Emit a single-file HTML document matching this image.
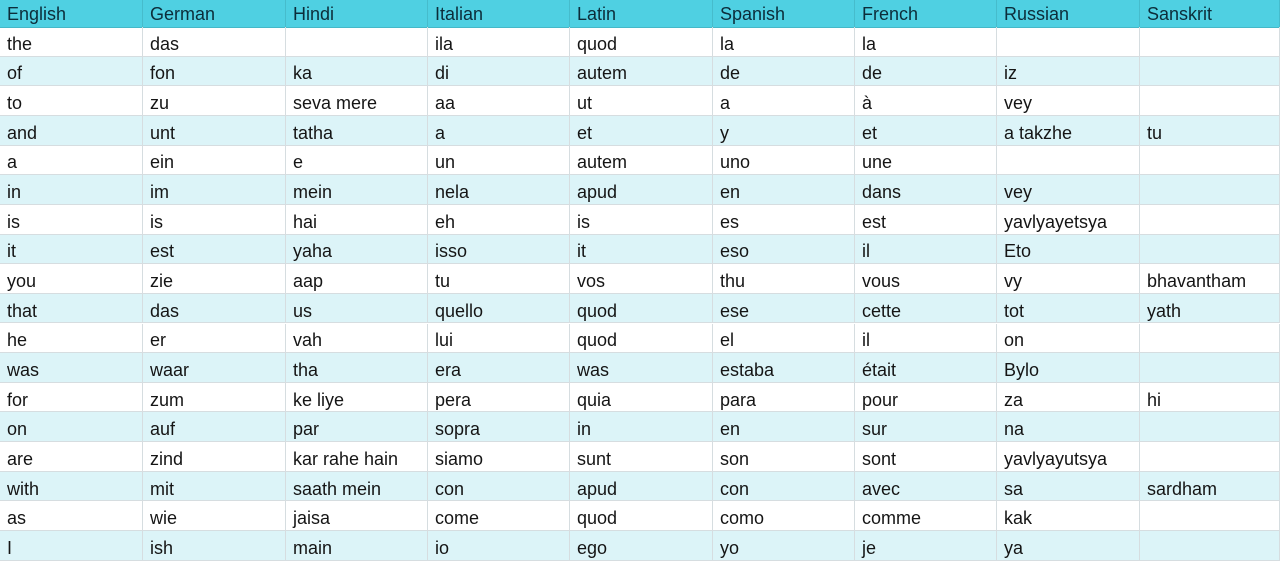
<!DOCTYPE html>
<html><head><meta charset="utf-8"><style>
body{margin:0;width:1280px;height:563px;overflow:hidden;background:#fff;font-family:"Liberation Sans",Arial,sans-serif;font-size:18px;color:#151515;position:relative}
.r{position:absolute;left:0;width:1280px;border-bottom:1px solid #d6dde0;box-sizing:border-box}
.c{position:absolute;top:0;bottom:0;padding-left:7px;padding-top:6px;box-sizing:border-box;border-right:1px solid #d6dde0;display:flex;align-items:center;white-space:nowrap}
.h{background:#4fd0e2;color:#0c2d3a;border-bottom:1px solid #44b8c8}
.h .c{border-right:1px solid #46bccc;padding-top:2px}
.a{background:#dcf4f8}
</style></head><body>
<div id="t"></div>
<script>
var cols=[0,143,286,428,570,713,855,997,1140,1280];
var data=[
["English","German","Hindi","Italian","Latin","Spanish","French","Russian","Sanskrit"],
["the","das","","ila","quod","la","la","",""],
["of","fon","ka","di","autem","de","de","iz",""],
["to","zu","seva mere","aa","ut","a","à","vey",""],
["and","unt","tatha","a","et","y","et","a takzhe","tu"],
["a","ein","e","un","autem","uno","une","",""],
["in","im","mein","nela","apud","en","dans","vey",""],
["is","is","hai","eh","is","es","est","yavlyayetsya",""],
["it","est","yaha","isso","it","eso","il","Eto",""],
["you","zie","aap","tu","vos","thu","vous","vy","bhavantham"],
["that","das","us","quello","quod","ese","cette","tot","yath"],
["he","er","vah","lui","quod","el","il","on",""],
["was","waar","tha","era","was","estaba","était","Bylo",""],
["for","zum","ke liye","pera","quia","para","pour","za","hi"],
["on","auf","par","sopra","in","en","sur","na",""],
["are","zind","kar rahe hain","siamo","sunt","son","sont","yavlyayutsya",""],
["with","mit","saath mein","con","apud","con","avec","sa","sardham"],
["as","wie","jaisa","come","quod","como","comme","kak",""],
["I","ish","main","io","ego","yo","je","ya",""]];
var h="";
data.forEach(function(r,i){
 var top=i==0?0:27+(i-1)*29.65, ht=i==0?27.5:29.65;
 var cls="r"+(i==0?" h":(i%2==0?" a":""));
 h+='<div class="'+cls+'" style="top:'+top+'px;height:'+ht+'px">';
 r.forEach(function(t,j){h+='<div class="c" style="left:'+cols[j]+'px;width:'+(cols[j+1]-cols[j])+'px">'+t+'</div>';});
 h+='</div>';
});
document.getElementById("t").innerHTML=h;
</script>
</body></html>
